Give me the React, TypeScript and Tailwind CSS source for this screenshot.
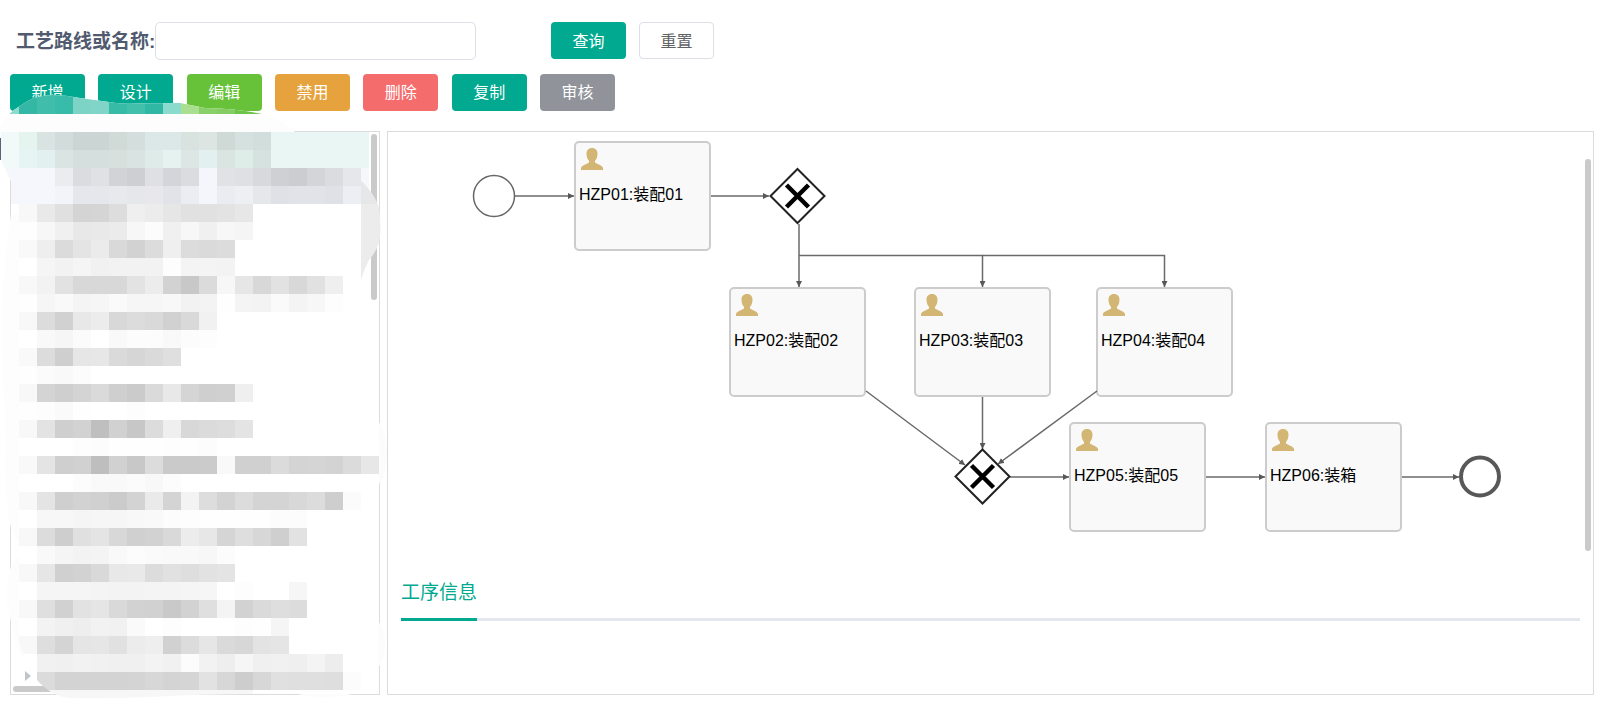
import clsx from 'clsx';

const actions = [
  { label: '新增', color: 'bg-[#00a98f]' },
  { label: '设计', color: 'bg-[#00a98f]' },
  { label: '编辑', color: 'bg-[#67c23a]' },
  { label: '禁用', color: 'bg-[#e6a23c]' },
  { label: '删除', color: 'bg-[#f56c6c]' },
  { label: '复制', color: 'bg-[#00a98f]' },
  { label: '审核', color: 'bg-[#909399]' },
];

const tasks = [
  { name: 'HZP01:装配01', x: 186, y: 9 },
  { name: 'HZP02:装配02', x: 341, y: 155 },
  { name: 'HZP03:装配03', x: 526, y: 155 },
  { name: 'HZP04:装配04', x: 708, y: 155 },
  { name: 'HZP05:装配05', x: 681, y: 290 },
  { name: 'HZP06:装箱', x: 877, y: 290 },
];

const flows = [
  'M127 64H186',
  'M323 64H381',
  'M411 92V155',
  'M411 123.5H594.5V155',
  'M594.5 123.5H776.5V155',
  'M478 259L577 333',
  'M594.5 265V317',
  'M709 259L610 332',
  'M622 345H681',
  'M818 345H877',
  'M1014 345H1071',
];

const CELL = 18;

// tinted cells of the selected and the hovered row
const tintedRows = [
  'e6f4f0 d8e3e2 d2dddb cbd5d3 cbd5d3 d0dbd8 d4dedc dbe8e7 dce8e7 d8e3e0 dce5e2 cfdad6 d5e1de d2dedb',
  'e6f4f3 e2f0ef dae5e3 d5e0de d5e0de d7e0dd d9e3e2 dfebe9 e5f2ef dce7e5 e2f0ef dae5e2 dfede9 d6e2e0',
  'f5f7fc f5f7fc ebecf0 dbdce0 e0e1e5 d2d3d7 cecfd3 dfe0e4 d4d5da dbdce0 f4f6fb e1e2e6 dfe0e4 d8d9dd cfd0d4 cccdd1 d4d5d9 dbdce0 e6e7eb',
  'f5f7fc f5f7fc f2f4f9 e6e7ec e6e7ec e8e9ec e5e7ea e8e8ec e2e3e9 ebedf2 f4f6fb ebecf1 eeeff3 e6e7eb e0e1e6 e2e3e8 e2e3e8 e0e1e6 edeef4',
];

// grey level of every cell below them
const greyRows = [
  'f8 e9 e0 d4 d5 dd ef ec e6 e1 e1 e3 e7',
  'fe f7 f0 e8 e9 eb f7 fc f0 f7 f0 f7 f5',
  'f9 ee db e4 eb d9 d2 dc ef dc da dc',
  'ff f5 f2 f5 f1 f2 f2 f2 fd f4 f4 f3',
  'f8 f2 e2 d8 d8 d8 e3 ec d2 c8 db f7 e6 d8 e2 d8 e1 ef',
  'fe f6 f9 f4 f6 fa f6 f6 f8 f2 f3 fe f4 f3 fa f4 f7 fd',
  'f8 dc d1 e8 ec d8 dc d9 d1 d9 f1',
  'ff f9 f6 fb ff f9 fc fc f9 fc fd',
  'f9 dc cf e6 e7 da d6 da df',
  'fe fb f9 fc',
  'f8 d4 cf d4 da cf cb da e8 d5 cf d0 ef',
  'fe fd fa fe ff ff fd',
  'f8 e3 cf d2 bf d1 c7 dc ef d8 db dd e4',
  'ff ff ff fd fc fe fe fe fd fe fc',
  'f9 e4 cf d1 be d1 c8 dc ca ca cb f9 d0 d0 db d4 d5 d3 db e7',
  'ff ff ff fc f9 f9 fb f8 fc',
  'f8 e4 cf d2 d0 cb d3 ea d4 f3 dd d3 dc d4 d4 d8 dc ce fb',
  'ff f7 f7 f5 f6 f6 f8 f9 fc fd fe fe fe fe fc fc',
  'f8 dc ce e0 e4 d8 d0 d2 d9 ec e7 d5 de d7 cf e2',
  'ff f9 f5 f3 f4 f9 fc fa f9 f9 f7 fc',
  'f8 e6 d0 d2 d9 e8 e9 dc e1 de e2 e4',
  'ff f5 f5 f5 f4 f3 f3 f4 f4 f5 f6 ff fd ff ff f6',
  'f8 df d1 e2 e5 d9 d2 d1 c9 d2 df f4 d2 da de dc',
  'ff f3 f0 ee f2 f1 fa ff fd ff ff ff fd fe f5',
  'f8 de d4 e5 e6 e1 ec ee d1 dc e6 da d7 e3 e5',
  'ff f1 f0 f2 f1 f0 f0 f3 f1 fc f2 ee f6 f0 f1 ef f4 ed',
  'ff db d3 d3 d3 d3 d4 d7 d4 d5 e2 d7 cd d7 e0 df df de fc',
];

const buttonCells = '8edacb 35b7a6 40beab 38bba8 7cd3c6 80d5c8 38bba6 42c0ac 30b8a4 8adace aadf90 8ad068 84cd62 6fc448 6fc448'.split(' ');

function Mosaic() {
  const rows = [
    ...tintedRows.map(row => row.split(' ')),
    ...greyRows.map(row => row.split(' ').map(v => v + v + v)),
  ];

  return (
    <svg className="absolute left-0 top-0 pointer-events-none" width="392" height="704" aria-hidden="true" shapeRendering="crispEdges">
      <defs>
        <clipPath id="brush-top">
          <path d="M0 132V126Q6 114 20 106Q34 95 52 95Q66 95 80 98L116 103Q126 104 136 103.5L180 103Q190 105 205 108Q240 109 262 114Q284 120 295 132Z"/>
        </clipPath>
        <clipPath id="brush-side">
          <path d="M345 168Q373 187 379 208Q382 229 379 243Q376 252 369 260Q364 269 361 280V168Z"/>
        </clipPath>
        <clipPath id="brush-body">
          <path d="M0 130H380V692H52Q40 686 31 672Q20 652 14 620L0 500Z"/>
        </clipPath>
      </defs>

      <g clipPath="url(#brush-top)">
        <rect y="90" width="300" height="44" fill="#fdfdfd"/>
        {buttonCells.map((color, i) => (
          <rect key={i} x={1 + i * CELL} y="90" width={CELL} height="24" fill={`#${color}`}/>
        ))}
      </g>

      {/* soft edge of the brush hides parts of the panel border */}
      <path shapeRendering="auto" fill="#fdfdfd" d="M0 132H20V205L14 192L11 181Q4 172 0 158Z"/>
      <path shapeRendering="auto" fill="#fdfdfd" d="M11 214Q4 260 2 310Q2 370 6 440Q4 500 11 528L20 545H30V214Z"/>
      <path shapeRendering="auto" fill="#fdfdfd" d="M19 556Q11 564 10 570Q3 592 10 617Q14 640 21 656H30V556Z"/>
      <path shapeRendering="auto" fill="#fcfcfc" d="M379 422Q387 436 387 456Q386 474 379 484Z"/>
      <path shapeRendering="auto" fill="#fcfcfc" d="M378 620Q385 632 385 646Q384 660 378 668Z"/>
      <path shapeRendering="auto" fill="#f7f7f7" d="M48 690H253V694Q200 694 150 697Q105 699 70 698Q58 697 48 690Z"/>
      <path shapeRendering="auto" fill="#fcfcfc" d="M298 694Q325 701 352 694Z"/>

      <path fill="#f2faf9" d="M1 132H19V168H4L1 158Z"/>
      <path fill="#f5f7fc" d="M5 168H19V202H16L11 181Z"/>
      <rect y="138" width="1" height="22" fill="#5a6478"/>

      <g clipPath="url(#brush-side)">
        <rect x="343" y="168" width="40" height="36" fill="#e6e7e9"/>
        <rect x="361" y="204" width="24" height="80" fill="#ececec"/>
      </g>

      <g clipPath="url(#brush-body)">
        {rows.map((row, y) => row.map((color, x) => (
          <rect key={`${y}-${x}`} x={19 + x * CELL} y={132 + y * CELL} width={CELL} height={CELL} fill={`#${color}`}/>
        )))}
      </g>
      <path d="M25 671L31 676L25 681Z" fill="#c0c4cc" shapeRendering="auto"/>
    </svg>
  )
}

function RouteList() {
  return (
    <section className="relative w-[370px] shrink-0 border border-[#dcdcdc]" aria-label="工艺路线">
      <div className="mr-[10px] h-9 bg-[#e9f6f4]"/>
      <div className="mr-[10px] h-9 bg-[#f5f7fa]"/>
      <div className="absolute right-[2px] top-[2px] h-[166px] w-[6px] rounded-full bg-[#cacaca]"/>
      <div className="absolute bottom-[2px] left-[2px] h-[6px] w-10 rounded-full bg-[#cacaca]"/>
    </section>
  )
}

function Gateway(props: { x: number, y: number }) {
  return (
    <g transform={`translate(${props.x} ${props.y})`}>
      <path d="M0 -27L27 0L0 27L-27 0Z" fill="#fff" stroke="#222" strokeWidth="2"/>
      <path d="M-11 -11L11 11M11 -11L-11 11" stroke="#000" strokeWidth="4.5"/>
    </g>
  )
}

function Task(props: { name: string, x: number, y: number }) {
  return (
    <div
      className="absolute h-[110px] w-[137px] rounded-[5px] border-2 border-[#cccccc] bg-[#f9f9f9] pl-[3px] pt-[5px]"
      style={{ left: props.x, top: props.y }}>
      <svg className="ml-[2px]" width="22" height="22" viewBox="0 0 22 22" fill="#d3b574" aria-hidden="true">
        <path d="M11 0C14.6 0 16.6 2.4 16.5 6C16.4 9.500 15.2 11.5 14 12.8V14.500C15.5 16 21.6 17.200 22 20V22H0V20C0.4 17.200 6.5 16 8 14.500V12.8C6.8 11.5 5.6 9.5 5.5 6C5.4 2.4 7.4 0 11 0Z"/>
      </svg>
      <p className="mt-[13px] leading-6 text-black">{props.name}</p>
    </div>
  )
}

function FlowChart() {
  return (
    <div className="relative h-[432px] overflow-hidden">
      {tasks.map(task => <Task key={task.name} {...task}/>)}

      <svg className="absolute left-0 top-0" width="1180" height="432" fill="none" aria-hidden="true">
        <defs>
          <marker id="arrow" markerWidth="7" markerHeight="6" refX="6" refY="3" orient="auto" markerUnits="userSpaceOnUse">
            <path d="M0 0L6 3L0 6Z" fill="#585858"/>
          </marker>
        </defs>
        {flows.map(d => (
          <path key={d} d={d} stroke="#6a6a6a" strokeWidth="1.5" markerEnd="url(#arrow)"/>
        ))}
        <circle cx="106" cy="64" r="20.5" stroke="#666" strokeWidth="1.5"/>
        <circle cx="1092" cy="344.5" r="19" stroke="#585858" strokeWidth="4"/>
        <Gateway x={409.5} y={64}/>
        <Gateway x={594.5} y={344.5}/>
      </svg>
    </div>
  )
}

export default function App() {
  return (
    <main className="relative bg-white pb-5 pl-[10px] pr-[18px] pt-[22px] font-['Liberation_Sans','Noto_Sans_CJK_SC',sans-serif] text-base">
      <form className="flex items-start" onSubmit={e => e.preventDefault()}>
        <label htmlFor="keyword" className="w-[145px] whitespace-nowrap pl-[6px] text-[19px] font-bold leading-[40px] text-[#515a6e]">工艺路线或名称:</label>
        <input id="keyword" type="text" className="h-[38px] w-[321px] rounded-[5px] border border-[#dcdfe6] bg-white px-4 outline-none"/>
        <div className="ml-[75px] flex gap-[13px]">
          <button type="submit" className="h-[37px] w-[75px] rounded-[4px] bg-[#00a98f] pt-[2px] text-white">查询</button>
          <button type="reset" className="h-[37px] w-[75px] rounded-[4px] border border-[#dcdfe6] bg-white pt-[2px] text-[#606266]">重置</button>
        </div>
      </form>

      <div className="mt-3 flex w-[605px] justify-between">
        {
          actions.map(action => (
            <button
              key={action.label}
              type="button"
              className={clsx('h-[37px] w-[75px] rounded-[4px] text-white', action.color)}>
              {action.label}
            </button>
          ))
        }
      </div>

      <div className="mt-5 flex gap-[7px]">
        <RouteList/>

        <section className="relative min-w-0 flex-1 border border-[#dcdcdc]">
          <FlowChart/>
          <div className="px-[13px] pb-[73px]">
            <div role="tablist" className="flex h-[57px] border-b-[3px] border-[#e4e7ed]">
              <button type="button" role="tab" aria-selected="true" className="-mb-[3px] border-b-[3px] border-[#00a98f] pt-1 text-[19px] text-[#00a98f]">
                工序信息
              </button>
            </div>
          </div>
          <div className="absolute right-[2px] top-[27px] h-[392px] w-[6px] rounded-full bg-[#cacaca]"/>
        </section>
      </div>

      <Mosaic/>
    </main>
  )
}
